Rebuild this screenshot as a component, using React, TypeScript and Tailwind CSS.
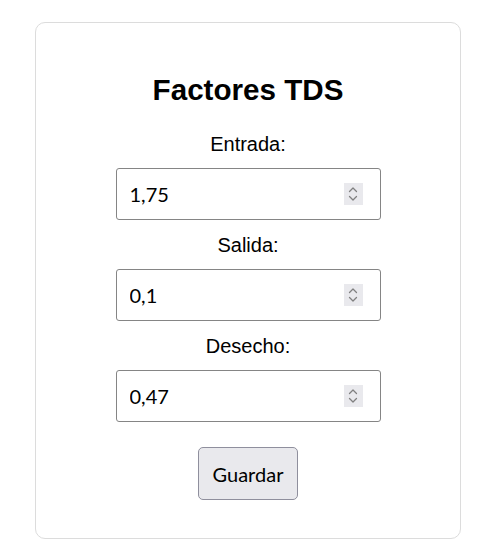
import React from "react";

function Spinner() {
  return (
    <div className="flex h-[22px] w-[19px] items-center justify-center bg-[#e9e9ed]">
      <svg width="12" height="18" viewBox="0 0 12 18" fill="none" stroke="#808080" strokeWidth="1.3" strokeLinecap="round" strokeLinejoin="round">
        <path d="M2.5 6.5 L6 3 L9.5 6.5" />
        <path d="M2.5 11.5 L6 15 L9.5 11.5" />
      </svg>
    </div>
  );
}

function Field({ label, value, first }: { label: string; value: string; first?: boolean }) {
  return (
    <div className={"flex flex-col items-center " + (first ? "mt-[25px]" : "mt-[13px]")}>
      <label className="text-[20px] leading-[24px] text-black" style={{ fontFamily: '"Liberation Sans", Arial, sans-serif' }}>
        {label}
      </label>
      <div className="mt-[12px] flex h-[52px] w-[265px] items-center rounded-[3px] border border-[#858585] bg-white pl-[13px] pr-[17px]">
        <input
          readOnly
          value={value}
          className="min-w-0 flex-1 bg-transparent text-[20px] text-black outline-none"
          style={{ fontFamily: 'Lato, "Noto Sans", sans-serif' }}
        />
        <Spinner />
      </div>
    </div>
  );
}

export default function App() {
  return (
    <div className="min-h-[555px] bg-white pt-[22px]">
      <div className="mx-auto flex h-[517px] w-[426px] flex-col items-center rounded-[10px] border border-[#dcdcdc] bg-white pt-[50px]">
        <h2
          className="text-[29.6px] font-bold leading-[34px] text-black"
          style={{ fontFamily: '"Liberation Sans", Arial, sans-serif' }}
        >
          Factores TDS
        </h2>
        <Field label="Entrada:" value="1,75" first />
        <Field label="Salida:" value="0,1" />
        <Field label="Desecho:" value="0,47" />
        <button
          className="mt-[25px] h-[53px] w-[100px] rounded-[5px] border border-[#8f8f9d] bg-[#e9e9ed] text-[20px] text-black"
          style={{ fontFamily: 'Lato, "Noto Sans", sans-serif' }}
        >
          Guardar
        </button>
      </div>
    </div>
  );
}
